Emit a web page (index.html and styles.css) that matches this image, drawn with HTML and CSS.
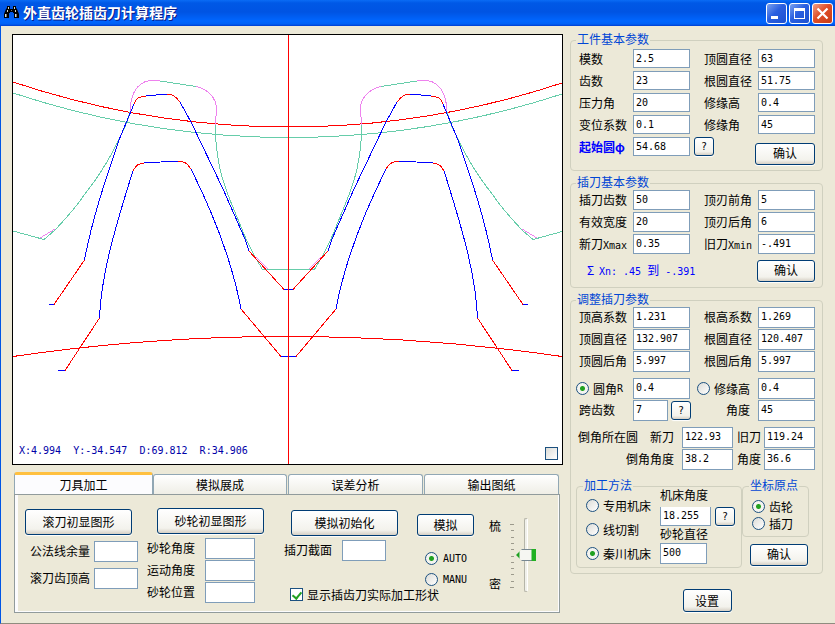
FILE: index.html
```
<!DOCTYPE html>
<html lang="zh-CN">
<head>
    <meta charset="UTF-8">
    <title>外直齿轮插齿刀计算程序</title>
    <link rel="stylesheet" href="styles.css">
</head>
<body>
    <header class="title-bar">
        <svg class="app-icon" width="15" height="14" viewBox="0 0 15 14">
            <path d="M3 1h3v3h3V1h3v2l1 1 2 5v4h-5V8H9V7H6v1H5v5H0V9l2-5 1-1z" fill="#000"/>
            <path d="M1 9h1v3H1zM11 9h1v3h-1zM4 2h1v2H4zM10 2h1v2h-1zM3 5h1v2H3zM11 5h1v2h-1z" fill="#d8d8c8"/>
            <path d="M2 9h1v3H2zM12 9h1v3h-1zM7 5h1v1H7z" fill="#777"/>
        </svg>
        <h1>外直齿轮插齿刀计算程序</h1>
        <button type="button" class="win-btn" aria-label="最小化">
            <svg width="19" height="19" viewBox="0 0 19 19"><path d="M4 12h7v3H4z" fill="#fff"/></svg>
        </button>
        <button type="button" class="win-btn" aria-label="最大化">
            <svg width="19" height="19" viewBox="0 0 19 19"><path d="M4 4h11v11H4zM5 7v7h9V7z" fill="#fff" fill-rule="evenodd"/></svg>
        </button>
        <button type="button" class="win-btn close" aria-label="关闭">
            <svg width="19" height="19" viewBox="0 0 19 19"><path d="M4.500 4.500l10 10M14.500 4.500l-10 10" stroke="#fff" stroke-width="2.200"/></svg>
        </button>
    </header>

    <main>
        <div class="left">
            <div class="canvas">
                <svg viewBox="13 35 549 429" fill="none" shape-rendering="crispEdges">
                    <!-- pitch circles and centre line -->
                    <path class="red" d="M13 82A869 869 0 0 0 562 83"/>
                    <path class="green" d="M13 93A878 878 0 0 0 562 94"/>
                    <path class="red" d="M13 356.500A1894 1894 0 0 1 562 356.500"/>
                    <!-- one half of the profile, mirrored for the other side -->
                    <g id="half">
                        <path class="green" d="M13 231L44 239.500L55 230C70 214 77 206 84 195C102 173 115 150 127 122L130 112"/>
                        <path class="pink" d="M40 238L55 229"/>
                        <path class="pink" d="M130 111C131 90 139 80 155 80H160"/>
                        <path class="green" d="M160 81L196 86.500"/>
                        <path class="pink" d="M196 86.500C209 89 216 99 216.500 108L215.500 125"/>
                        <path class="green" d="M215 125C216 160 222 180 230 200L246 239L255 257L262.500 269.500H289"/>
                        <path class="pink" d="M256 257L268 269"/>
                        <path class="blue" d="M84.500 260C92 220 104 184 119 140L134 104"/>
                        <path class="red" d="M134 104C137 97 139 97 146 96.500"/>
                        <path class="blue" d="M146 95.500L167 94.500"/>
                        <path class="red" d="M167 94.500C173 94 176 97 180 102"/>
                        <path class="blue" d="M180 102L191 122L223 189L245 239L249 251"/>
                        <path class="red" d="M249 251L284 289.500"/>
                        <path class="blue" d="M284 289.500H289"/>
                        <path class="red" d="M84.500 260L54 304.500"/>
                        <path class="blue" d="M49 304.500H54"/>
                        <path class="blue" d="M99.500 318C101 280 111 240 133 171"/>
                        <path class="red" d="M133 171C136 165 139 163.500 144 163"/>
                        <path class="blue" d="M144 162.500L178 161.500"/>
                        <path class="red" d="M178 161.500C185 161.500 187 163 191 169"/>
                        <path class="blue" d="M191 169C210 207 231 255 241 309"/>
                        <path class="red" d="M241 309L281 356.500"/>
                        <path class="blue" d="M281 356.500H289"/>
                        <path class="red" d="M99.500 318L65 370.500"/>
                        <path class="blue" d="M58 370.500H65"/>
                    </g>
                    <use href="#half" transform="translate(577) scale(-1 1)"/>
                    <path class="red" d="M288.500 35V464"/>
                </svg>
                <p class="coords num">X:4.994  Y:-34.547  D:69.812  R:34.906</p>
                <input type="checkbox" class="canvas-check" aria-label="显示">
            </div>

            <div class="tabs">
                <nav class="tab-list">
                    <button type="button" class="tab active">刀具加工</button>
                    <button type="button" class="tab">模拟展成</button>
                    <button type="button" class="tab">误差分析</button>
                    <button type="button" class="tab">输出图纸</button>
                </nav>
                <div class="tab-panel">
                    <div class="tool-col hob">
                        <button type="button" class="btn wide">滚刀初显图形</button>
                        <div class="field"><label for="normalAllow">公法线余量</label><input type="text" id="normalAllow"></div>
                        <div class="field"><label for="hobTip">滚刀齿顶高</label><input type="text" id="hobTip"></div>
                    </div>
                    <div class="tool-col wheel">
                        <button type="button" class="btn wide">砂轮初显图形</button>
                        <div class="field"><label for="wheelAngle">砂轮角度</label><input type="text" id="wheelAngle"></div>
                        <div class="field"><label for="moveAngle">运动角度</label><input type="text" id="moveAngle"></div>
                        <div class="field"><label for="wheelPos">砂轮位置</label><input type="text" id="wheelPos"></div>
                    </div>
                    <div class="tool-col sim">
                        <button type="button" class="btn wide">模拟初始化</button>
                        <div class="field"><label for="section">插刀截面</label><input type="text" id="section"></div>
                    </div>
                    <div class="tool-col mode">
                        <button type="button" class="btn">模拟</button>
                        <label><input type="radio" name="mode" checked><span class="num">AUTO</span></label>
                        <label><input type="radio" name="mode"><span class="num">MANU</span></label>
                    </div>
                    <div class="density">
                        <div class="density-text"><label for="density">梳</label><span>密</span></div>
                        <svg width="6" height="66" viewBox="0 0 6 66" shape-rendering="crispEdges">
                            <path d="M0 1.500h4M1 7.500h3M1 14.500h3M1 20.500h3M1 26.500h3M1 33.500h3M1 39.500h3M1 45.500h3M1 51.500h3M1 58.500h3M0 64.500h4" stroke="#9c9a8c"/>
                        </svg>
                        <input type="range" id="density" min="0" max="10" value="5">
                    </div>
                    <label class="show-shape"><input type="checkbox" checked>显示插齿刀实际加工形状</label>
                </div>
            </div>
        </div>

        <form class="right">
            <fieldset class="work">
                <legend>工件基本参数</legend>
                <div class="row">
                    <div class="pair"><label for="modulus">模数</label><input type="text" id="modulus" value="2.5"></div>
                    <div class="pair"><label for="tipDia">顶圆直径</label><input type="text" id="tipDia" value="63"></div>
                </div>
                <div class="row">
                    <div class="pair"><label for="teeth">齿数</label><input type="text" id="teeth" value="23"></div>
                    <div class="pair"><label for="rootDia">根圆直径</label><input type="text" id="rootDia" value="51.75"></div>
                </div>
                <div class="row">
                    <div class="pair"><label for="pressure">压力角</label><input type="text" id="pressure" value="20"></div>
                    <div class="pair"><label for="trimH">修缘高</label><input type="text" id="trimH" value="0.4"></div>
                </div>
                <div class="row">
                    <div class="pair"><label for="shift">变位系数</label><input type="text" id="shift" value="0.1"></div>
                    <div class="pair"><label for="trimA">修缘角</label><input type="text" id="trimA" value="45"></div>
                </div>
                <div class="line">
                    <div class="pair half"><label for="startDia" class="start">起始圆φ</label><input type="text" id="startDia" value="54.68"></div>
                    <button type="button" class="btn help">?</button>
                    <button type="button" class="btn ok">确认</button>
                </div>
            </fieldset>

            <fieldset class="cutter">
                <legend>插刀基本参数</legend>
                <div class="row">
                    <div class="pair"><label for="cutTeeth">插刀齿数</label><input type="text" id="cutTeeth" value="50"></div>
                    <div class="pair"><label for="rake">顶刃前角</label><input type="text" id="rake" value="5"></div>
                </div>
                <div class="row">
                    <div class="pair"><label for="width">有效宽度</label><input type="text" id="width" value="20"></div>
                    <div class="pair"><label for="relief">顶刃后角</label><input type="text" id="relief" value="6"></div>
                </div>
                <div class="row">
                    <div class="pair"><label for="xmax">新刀<span class="num">Xmax</span></label><input type="text" id="xmax" value="0.35"></div>
                    <div class="pair"><label for="xmin">旧刀<span class="num">Xmin</span></label><input type="text" id="xmin" value="-.491"></div>
                </div>
                <div class="line">
                    <p class="sum"><span class="sigma">Σ</span><span class="num">Xn: .45 </span>到<span class="num"> -.391</span></p>
                    <button type="button" class="btn ok">确认</button>
                </div>
            </fieldset>

            <fieldset class="adjust">
                <legend>调整插刀参数</legend>
                <div class="row">
                    <div class="pair"><label for="ha">顶高系数</label><input type="text" id="ha" value="1.231"></div>
                    <div class="pair"><label for="hf">根高系数</label><input type="text" id="hf" value="1.269"></div>
                </div>
                <div class="row">
                    <div class="pair"><label for="da">顶圆直径</label><input type="text" id="da" value="132.907"></div>
                    <div class="pair"><label for="df">根圆直径</label><input type="text" id="df" value="120.407"></div>
                </div>
                <div class="row">
                    <div class="pair"><label for="ra">顶圆后角</label><input type="text" id="ra" value="5.997"></div>
                    <div class="pair"><label for="rf">根圆后角</label><input type="text" id="rf" value="5.997"></div>
                </div>
                <div class="row picks">
                    <div class="pair"><label><input type="radio" name="corner" checked>圆角<span class="num">R</span></label><input type="text" aria-label="圆角R" value="0.4"></div>
                    <div class="pair"><label><input type="radio" name="corner">修缘高</label><input type="text" aria-label="修缘高" value="0.4"></div>
                </div>
                <div class="row">
                    <div class="pair span"><label for="span">跨齿数</label><input type="text" id="span" value="7"><button type="button" class="btn help">?</button></div>
                    <div class="pair end"><label for="angle">角度</label><input type="text" id="angle" value="45"></div>
                </div>
                <div class="row chamfer first">
                    <div class="pair end"><label for="newCircle">倒角所在圆&emsp;新刀</label><input type="text" id="newCircle" value="122.93"></div>
                    <div class="pair"><label for="oldCircle">旧刀</label><input type="text" id="oldCircle" value="119.24"></div>
                </div>
                <div class="row chamfer">
                    <div class="pair end"><label for="newAngle">倒角角度</label><input type="text" id="newAngle" value="38.2"></div>
                    <div class="pair"><label for="oldAngle">角度</label><input type="text" id="oldAngle" value="36.6"></div>
                </div>

                <div class="sub-groups">
                    <fieldset class="method">
                        <legend>加工方法</legend>
                        <div class="machines">
                            <label><input type="radio" name="machine">专用机床</label>
                            <label><input type="radio" name="machine">线切割</label>
                            <label><input type="radio" name="machine" checked>秦川机床</label>
                        </div>
                        <div class="machine-values">
                            <label for="machineAngle">机床角度</label>
                            <div class="line">
                                <input type="text" id="machineAngle" value="18.255">
                                <button type="button" class="btn help">?</button>
                            </div>
                            <label for="wheelDia">砂轮直径</label>
                            <input type="text" id="wheelDia" value="500">
                        </div>
                    </fieldset>
                    <div class="origin-col">
                        <fieldset class="origin">
                            <legend>坐标原点</legend>
                            <label><input type="radio" name="origin" checked>齿轮</label>
                            <label><input type="radio" name="origin">插刀</label>
                        </fieldset>
                        <button type="button" class="btn ok">确认</button>
                    </div>
                </div>
            </fieldset>

            <button type="button" class="btn settings">设置</button>
        </form>
    </main>
</body>
</html>
```
FILE: styles.css
```
* {
    box-sizing: border-box;
}

body {
    margin: 0;
    font-family: "Noto Sans CJK SC", sans-serif;
    font-size: 12px;
    line-height: 19px;
    color: #000;
    background: #ece9d8;
}

p {
    margin: 0;
}

button,
input {
    font-family: inherit;
    font-size: 12px;
    margin: 0;
    color: #000;
}

.num {
    font-family: "DejaVu Sans Mono", monospace;
    font-size: 10px;
    white-space: pre;
}

/* title bar */
.title-bar {
    display: flex;
    align-items: center;
    gap: 2px;
    height: 26px;
    padding: 0 2px 0 4px;
    background: linear-gradient(#0a6cf5 0, #0058e6 3px, #0054e3 12px, #0066ff 21px, #0061f5 24px, #003dd0 26px);
}

.title-bar h1 {
    flex: 1;
    margin: 0 0 0 2px;
    font-size: 14px;
    line-height: 24px;
    color: #fff;
    text-shadow: 1px 1px 0 #0a1883;
}

.app-icon {
    margin-bottom: 3px;
}

.title-bar h1 {
    padding-bottom: 2px;
}

.win-btn {
    width: 21px;
    height: 21px;
    padding: 0;
    border: 1px solid #fff;
    border-radius: 3px;
    background: linear-gradient(135deg, #7ba2f0, #2a5fe0 45%, #1c50d0);
}

.win-btn.close {
    background: linear-gradient(135deg, #f0a088, #e04e28 45%, #c83c14);
}

.win-btn svg {
    display: block;
}

main {
    display: grid;
    grid-template-columns: 1fr 253px;
    gap: 7px;
    min-height: calc(100vh - 26px);
    padding: 8px 12px 8px 11px;
    border-left: 1px solid #0055e5;
    border-bottom: 1px solid #8f8c7f;
}

/* drawing */
.canvas {
    position: relative;
    border: 1px solid #000;
    background: #fff;
}

.canvas svg {
    display: block;
    width: 100%;
}

.red {
    stroke: #f00;
}

.green {
    stroke: #66cdaa;
}

.pink {
    stroke: #ee82ee;
}

.blue {
    stroke: #00f;
}

.coords {
    position: absolute;
    left: 6px;
    bottom: 4px;
    color: #0000a8;
}

.canvas-check {
    position: absolute;
    right: 4px;
    bottom: 4px;
}

/* inputs */
input[type="text"] {
    width: 57px;
    height: 21px;
    padding: 0 2px 2px;
    border: 1px solid #7f9db9;
    background: #fff;
    font-family: "DejaVu Sans Mono", monospace;
    font-size: 10px;
}

input[type="radio"],
input[type="checkbox"] {
    appearance: none;
    flex: none;
    width: 13px;
    height: 13px;
    border: 1px solid #1c5180;
    background: linear-gradient(135deg, #dcdcd7, #fff);
}

input[type="radio"] {
    border-radius: 50%;
}

input[type="radio"]:checked {
    background: radial-gradient(circle, #21a121 0 2px, #f4f4f0 3px);
}

.show-shape input:checked {
    background: #fff;
}

.show-shape input:checked::before {
    content: "";
    display: block;
    width: 4px;
    height: 7px;
    margin: 1px 0 0 3px;
    border: solid #21a121;
    border-width: 0 2px 2px 0;
    transform: rotate(40deg);
}

.btn {
    height: 22px;
    padding: 0;
    border: 1px solid #003c74;
    border-radius: 3px;
    background: linear-gradient(#fff, #f3f2ec 80%, #d6d0c5);
    box-shadow: 0 1px 1px #fff;
    line-height: 16px;
}

.btn.wide {
    width: 107px;
    height: 26px;
}

.btn.ok {
    width: 58px;
    padding-bottom: 2px;
}

.btn.help {
    width: 20px;
    height: 19px;
    font-family: "DejaVu Sans Mono", monospace;
    font-size: 10px;
}

/* tabs */
.tabs {
    margin: 7px 3px 0 2px;
}

.tab-list {
    display: grid;
    grid-template-columns: 139fr 135fr 136fr 136fr;
    align-items: end;
}

.tab {
    height: 20px;
    margin-right: 1px;
    padding: 0;
    border: 1px solid #91a7b4;
    border-bottom: 0;
    border-radius: 3px 3px 0 0;
    background: linear-gradient(#fff, #efeee6);
    line-height: 18px;
}

.tab.active {
    height: 22px;
    margin: 0;
    border-top: 3px solid #ffc040;
    background: #fcfcfe;
}

.tab-panel {
    display: grid;
    grid-template-columns: 122px 137px 133px 72px 1fr;
    grid-template-rows: 93px 1fr;
    min-height: 119px;
    padding-left: 10px;
    border: 1px solid #919b9c;
    box-shadow: inset 3px 0 0 #fcfcfe, inset -1px -1px 0 #fcfcfe;
}

.field {
    display: flex;
    justify-content: space-between;
}

.tool-col .field input {
    padding: 0 2px;
}

.hob,
.wheel,
.density {
    grid-row: 1 / 3;
}

.hob {
    width: 113px;
    padding-top: 14px;
}

.hob .field {
    margin: 6px 0 0 5px;
}

.hob input {
    width: 44px;
}

.wheel {
    width: 108px;
    padding-top: 13px;
}

.wheel .wide {
    margin: 0 0 4px 10px;
}

.wheel .field {
    height: 22px;
}

.wheel input {
    width: 50px;
}

.sim {
    width: 114px;
    padding-top: 15px;
}

.sim .wide {
    margin: 0 0 4px 7px;
}

.sim .field {
    width: 102px;
}

.sim input {
    width: 44px;
}

.mode {
    padding-top: 19px;
}

.mode .btn {
    width: 57px;
    margin-bottom: 12px;
}

.mode label {
    display: flex;
    align-items: center;
    gap: 5px;
    height: 21px;
    margin-left: 8px;
}

.show-shape {
    grid-column: 3 / 5;
    grid-row: 2;
    display: flex;
    gap: 4px;
    padding-left: 6px;
    line-height: 14px;
}

.density {
    display: flex;
    padding-top: 23px;
}

.density-text {
    display: flex;
    flex-direction: column;
    justify-content: space-between;
    width: 21px;
    height: 74px;
    line-height: 16px;
}

.density svg {
    margin-top: 5px;
}

.density input {
    appearance: none;
    writing-mode: vertical-lr;
    width: 20px;
    height: 74px;
    background: none;
}

.density input::-webkit-slider-runnable-track {
    width: 4px;
    border: 1px solid #b5b5a8;
    border-right-color: #fff;
    border-radius: 2px;
    background: #f0f0ea;
}

.density input::-webkit-slider-thumb {
    appearance: none;
    width: 20px;
    height: 12px;
    margin-left: -9px;
    background:
        linear-gradient(90deg, #21a121 3px, transparent 4px 15px, #21b121 16px),
        linear-gradient(#778892 1px, #f6f6f2 1px 11px, #778892 11px);
    clip-path: polygon(0 50%, 30% 0, 100% 0, 100% 100%, 30% 100%);
}

/* parameter groups */
.right {
    display: flex;
    flex-direction: column;
    gap: 6px;
}

fieldset {
    min-width: 0;
    margin: 0;
    padding: 0 7px 5px 8px;
    border: 1px solid #d0d0bf;
    border-radius: 4px;
}

legend {
    margin-left: -3px;
    padding: 0 1px 3px;
    line-height: 10px;
    color: #0046d5;
}

.row {
    display: grid;
    grid-template-columns: 1fr 1fr;
    column-gap: 14px;
    height: 22px;
}

.pair {
    display: flex;
    white-space: nowrap;
}

.pair label {
    flex: 1;
}

.pair.half {
    width: 111px;
}

.pair.end label {
    padding-right: 8px;
    text-align: right;
}

.line {
    display: flex;
    gap: 4px;
}

.line .ok {
    margin-left: auto;
}

.work {
    padding-top: 2px;
}

.work input[type="text"] {
    height: 19px;
    padding-bottom: 0;
}

.work .ok {
    width: 60px;
    margin-top: 6px;
}

.start {
    font-weight: bold;
    color: #00f;
}

.cutter input[type="text"] {
    height: 20px;
    padding-bottom: 1px;
}

.cutter .line {
    padding-top: 4px;
    padding-left: 8px;
}

.sum {
    color: #00f;
}

.sigma {
    display: inline-block;
    width: 12px;
}

.row.picks {
    grid-template-columns: 114fr 118fr;
    column-gap: 7px;
    margin: 5px 0 0 -3px;
}

.picks label {
    display: flex;
    align-items: center;
    gap: 4px;
    height: 21px;
}

.picks .num {
    margin-left: -4px;
}

.span input[type="text"] {
    width: 35px;
}

.span .help {
    margin: 1px -1px 0 3px;
}

.span label {
    flex: 0 0 54px;
}

.row.chamfer {
    grid-template-columns: 154px 78px;
    column-gap: 4px;
}

.row.chamfer.first {
    margin-top: 5px;
}

.chamfer input[type="text"] {
    width: 51px;
}

.chamfer .end {
    margin-left: -1px;
}

.chamfer .end label {
    flex: 0 0 104px;
}

.sub-groups {
    display: flex;
    align-items: flex-start;
    margin: 9px 6px 0 -3px;
}

.sub-groups label {
    display: flex;
    align-items: center;
    gap: 4px;
}

.method {
    flex: 1;
    display: flex;
    height: 88px;
    padding: 0 6px 0 9px;
}

.machines {
    width: 75px;
}

.machines label {
    height: 24px;
}

.machine-values {
    margin-top: -6px;
}

.machine-values label {
    line-height: 15px;
}

.machine-values .line input {
    width: 51px;
    height: 19px;
    border-top: 0;
}

.machine-values > input[type="text"] {
    width: 47px;
}

.machine-values .line {
    margin-top: 5px;
}

.origin {
    height: 57px;
    padding: 5px 0 0 9px;
}

.origin label {
    line-height: 17px;
}

.origin-col {
    width: 67px;
}

.origin-col .ok {
    margin: 7px 0 0 8px;
}

.settings {
    align-self: center;
    width: 49px;
    height: 23px;
    margin: 9px 0 0 21px;
}
```
